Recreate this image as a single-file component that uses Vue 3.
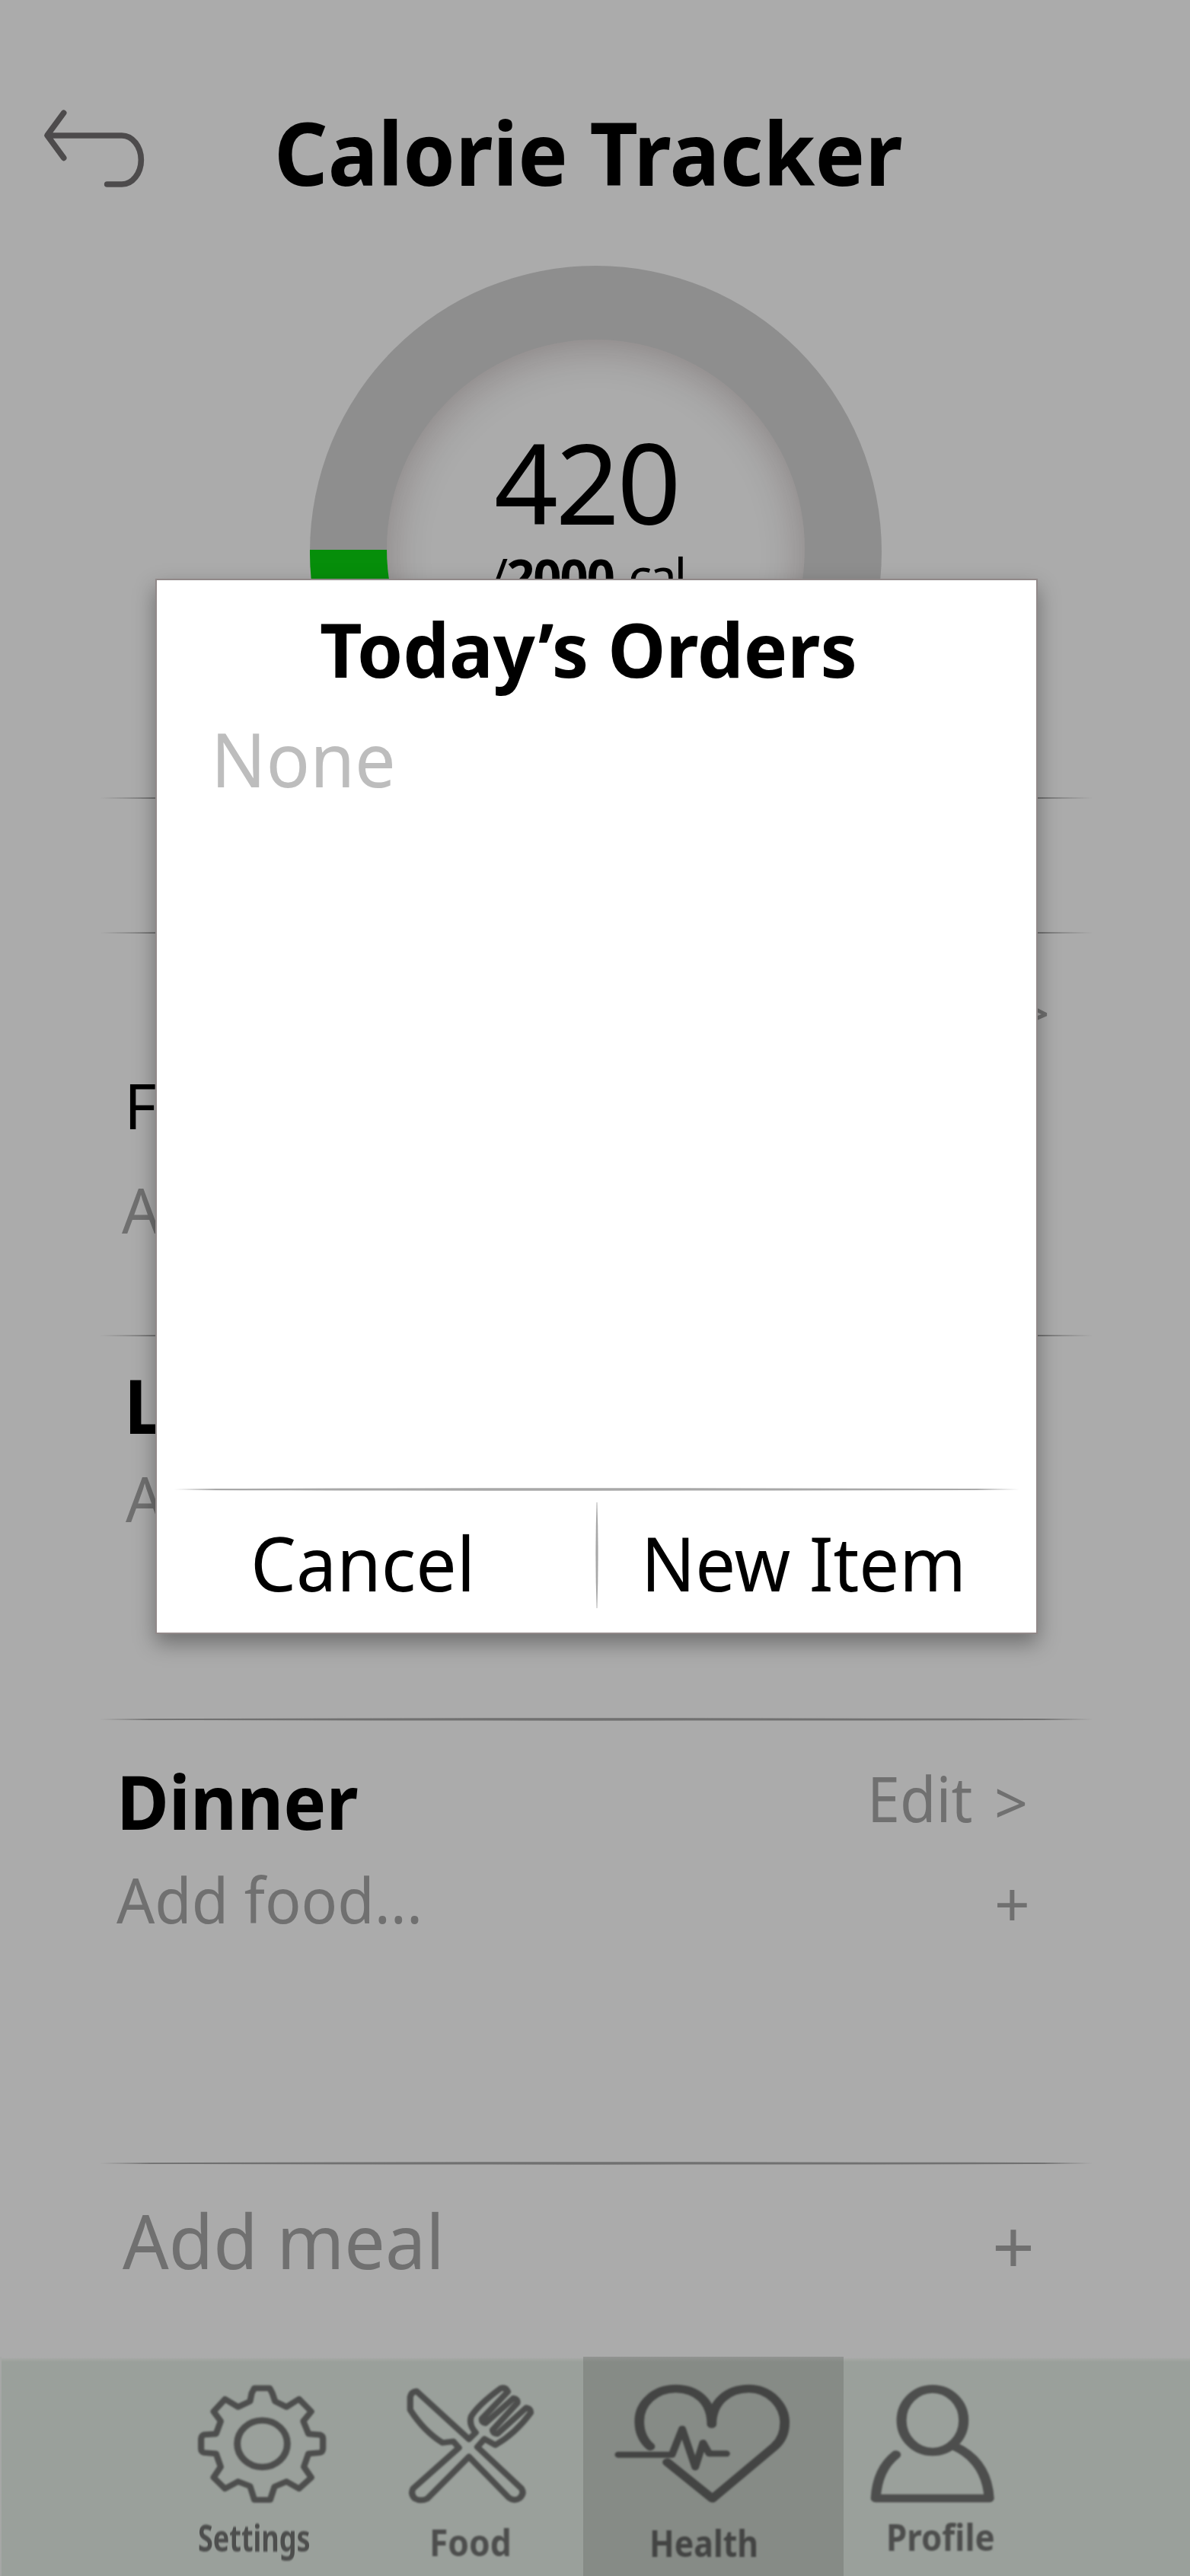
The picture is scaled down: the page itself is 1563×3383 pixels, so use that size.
<script setup>
const rule = 'M0 1.2 C33 0 67 0 100 1.2 V2.8 C67 4 33 4 0 2.8 Z'

const tabs = [
  {
    id: 'settings', label: 'Settings', box: '160 145 490 490',
    shapes: [
      { w: 23, d: 'M376 170 H432 L442 190 L452 222 L494 244 L540 213 L585 262 L556 300 L575 350 L618 354 Q628 358 628 370 V408 Q627 421 618 424 L575 428 L558 480 L585 522 L540 566 L494 538 L450 558 L434 610 H376 L360 556 L316 538 L268 566 L226 522 L252 480 L235 428 L190 424 Q180 420 180 408 V370 Q181 356 192 353 L235 350 L252 300 L226 262 L268 213 L316 244 L360 222 L366 190 Z' },
      { w: 25, d: 'M313 389 A92 92 0 0 1 497 389 A92 92 0 0 1 313 389 Z' }
    ]
  },
  {
    id: 'food', label: 'Food', box: '930 145 480 490',
    shapes: [
      { w: 23, d: 'M949 205 Q953 184 972 182 L1165 371 L1190 345 Q1164 315 1173 282 Q1200 235 1283 170 Q1300 165 1308 184 L1213 290 Q1210 305 1226 308 L1328 210 Q1345 212 1343 228 L1252 335 Q1254 350 1270 350 L1376 247 Q1393 250 1392 267 Q1335 350 1262 394 L1222 370 L1196 402 L1358 565 Q1370 585 1352 603 Q1332 618 1312 602 L1165 440 L1012 605 Q988 618 966 605 Q949 588 960 565 L1128 405 L1108 380 L1068 385 Q1000 340 949 255 Z' },
      { w: 9, d: 'M1238 292 L1322 215 M1288 330 L1345 275' }
    ]
  },
  {
    id: 'health', label: 'Health', box: '155 145 580 490', active: true,
    shapes: [
      { w: 31, d: 'M280 400 Q245 362 245 300 C245 230 295 172 362 172 C430 172 478 225 478 312 C478 225 530 172 598 172 C665 172 713 240 713 305 Q713 365 680 400 L480 605 L335 462' },
      { w: 24, d: 'M178 432 H350 L383 330 L425 482 L450 385 L470 428 H525' }
    ]
  },
  {
    id: 'profile', label: 'Profile', box: '980 145 415 490',
    shapes: [
      { w: 32, d: 'M1088 297 A100 124 0 0 1 1288 297 A100 124 0 0 1 1088 297 Z' },
      { w: 32, d: 'M1070 432 Q1010 490 1005 604 H1370 Q1362 455 1255 397' }
    ]
  }
]
</script>

<template>
  <div class="screen">
    <header class="top">
      <svg class="back" viewBox="0 0 540 390">
        <path d="M131 55 L66 143 L131 232 M68 144 H360 A76 96 0 0 1 360 336 H302" />
      </svg>
      <h1>Calorie Tracker</h1>
    </header>

    <section class="gauge">
      <svg class="ring" viewBox="0 0 751 697">
        <circle cx="375.5" cy="375.5" r="375.5" fill="#8e8e8e" />
        <path d="M0 373 A375.5 375.5 0 0 0 375.5 751 V373 Z" fill="#068e0a" />
      </svg>
      <div class="disc"></div>
      <div class="reading">
        <div class="value">420</div>
        <div class="goal">/<b>2000</b><span>cal</span></div>
      </div>
    </section>

    <svg class="rule" viewBox="0 0 100 4" preserveAspectRatio="none"><path :d="rule" /></svg>
    <section class="blank"></section>
    <svg class="rule" viewBox="0 0 100 4" preserveAspectRatio="none"><path :d="rule" /></svg>

    <section class="meal breakfast">
      <div class="row head"><span class="edit"><i class="gt">&gt;</i></span></div>
      <div class="row item">F</div>
      <div class="row add"><span>Add food...</span></div>
    </section>
    <svg class="rule" viewBox="0 0 100 4" preserveAspectRatio="none"><path :d="rule" /></svg>

    <section class="meal lunch">
      <h2 class="row">Lunch</h2>
      <div class="row add"><span>Add food...</span></div>
    </section>
    <svg class="rule" viewBox="0 0 100 4" preserveAspectRatio="none"><path :d="rule" /></svg>

    <section class="meal dinner">
      <div class="row head">
        <h2>Dinner</h2>
        <span class="edit"><span>Edit</span><i class="gt">&gt;</i></span>
      </div>
      <div class="row add"><span>Add food...</span><i class="plus">+</i></div>
    </section>
    <svg class="rule" viewBox="0 0 100 4" preserveAspectRatio="none"><path :d="rule" /></svg>

    <section class="meal new-meal">
      <div class="row add"><span>Add meal</span><i class="plus">+</i></div>
    </section>

    <nav class="tabs">
      <div v-for="t in tabs" :key="t.id" class="tab" :class="[t.id, { active: t.active }]">
        <svg :viewBox="t.box" preserveAspectRatio="none">
          <path v-for="(s, i) in t.shapes" :key="i" :d="s.d" :stroke-width="s.w" />
        </svg>
        <span class="label">{{ t.label }}</span>
      </div>
    </nav>

    <div class="modal">
      <h3>Today’s Orders</h3>
      <p class="none">None</p>
      <svg class="line" viewBox="0 0 100 4" preserveAspectRatio="none"><path :d="rule" /></svg>
      <div class="actions">
        <span class="cancel">Cancel</span>
        <svg class="split" viewBox="0 0 4 139"><path d="M1.6 0 C0 46 0 93 1.6 139 H2.4 C4 93 4 46 2.4 0 Z" /></svg>
        <span class="create">New Item</span>
      </div>
    </div>
  </div>
</template>

<style>
body { margin: 0; background: #ababab; }
</style>

<style scoped>
.screen {
  position: relative;
  display: flex;
  flex-direction: column;
  width: 1563px;
  height: 3383px;
  overflow: hidden;
  background: #ababab;
  color: #000;
  font-family: "Noto Sans", sans-serif;
  line-height: 1;
  white-space: nowrap;
}
h1, h2, h3, p { margin: 0; line-height: 1; }
i { font-style: normal; }
svg { display: block; flex: none; }
h1, h2, h3, .none, .cancel, .create, .add span, .edit span, .label { transform-origin: 0 0; }

.top { display: flex; height: 349px; }
.back { width: 180px; height: 130px; margin: 130px 0 0 40px; }
.back path {
  fill: none;
  stroke: #4d4b4c;
  stroke-width: 23;
  stroke-linecap: round;
  stroke-linejoin: round;
}
h1 { height: 115px; margin: 143px 0 0 140px; font-size: 114.4px; transform: scaleX(0.962); }

.gauge { display: grid; width: 751px; height: 697px; margin-left: 407px; overflow: hidden; }
.ring, .disc, .reading { grid-area: 1 / 1; }
.ring { width: 751px; height: 697px; }
.disc {
  width: 549px;
  height: 549px;
  margin: 97px 0 0 101px;
  border-radius: 50%;
  background: #ababab;
  box-shadow: inset 0 6px 54px rgba(36, 12, 10, 0.25);
}
.reading { padding: 210px 0 0 236px; }
.value { margin-left: 6px; font-size: 147px; letter-spacing: -3.3px; }
.goal { margin-top: 18px; font-size: 65px; letter-spacing: -2px; }
.goal span { margin-left: 19px; letter-spacing: -3.6px; }

.rule { width: 1304px; height: 4px; margin-left: 131px; fill: #707070; }
.rule, .line {
  -webkit-mask-image: linear-gradient(90deg, transparent, #000 5%, #000 95%, transparent);
  mask-image: linear-gradient(90deg, transparent, #000 5%, #000 95%, transparent);
}
.blank { height: 173px; }

.meal { box-sizing: border-box; font-size: 82px; }
.row { display: flex; justify-content: space-between; }
h2 { font-size: 98px; transform: scaleX(0.96); }
.add, .edit { color: #707070; }
.add span { transform: scaleX(0.961); }
.edit { display: flex; }
.edit span { transform: scaleX(0.942); }
.gt { padding-top: 8px; font-size: 77px; }

.breakfast { height: 525px; padding: 56px 184px 0 160px; }
.breakfast .head { height: 82px; justify-content: flex-end; }
.breakfast .item { margin: 45px 0 0 3px; }
.breakfast .add { margin-top: 55px; }

.lunch { height: 500px; padding: 40px 0 0 163px; }
.lunch .add { margin: 32px 0 0 2px; }

.dinner { height: 579px; padding: 56px 0 0 153px; }
.dinner .head { width: 1197px; height: 98px; }
.dinner .edit { padding-top: 4px; }
.dinner .gt { margin-left: 20px; }
.dinner .add { width: 1200px; margin-top: 39px; }
.dinner .plus { margin-top: 5px; }

.new-meal { height: 252px; padding: 50px 0 0 161px; font-size: 98px; }
.new-meal .row { width: 1196px; }
.new-meal .row span { transform: scaleX(0.97); }
.new-meal .plus { margin: 7px -2px 0 0; }

.tabs {
  display: flex;
  height: 288px;
  background: linear-gradient(#ababab 1px, #a1a5a1 4px, #9aa09b 7px);
  box-shadow: inset 2px 0 #a6a8a6;
}
.tab { box-sizing: border-box; padding-top: 33px; color: #4d4e4d; }
.tab svg { height: 163.3px; fill: none; stroke: #4d4e4d; stroke-linecap: round; stroke-linejoin: round; filter: blur(0.9px); }
.label {
  display: block;
  width: max-content;
  font-size: 49px;
  font-weight: 700;
  filter: blur(1px);
}
.settings { width: 480px; padding-left: 257px; }
.settings svg { width: 175px; }
.settings .label { margin: 17px 0 0 3px; transform: scaleX(0.735); }
.food { width: 286px; padding-left: 52px; }
.food svg { width: 171.4px; }
.food .label { margin: 23px 0 0 32px; transform: scaleX(0.906); }
.health { width: 342px; padding-left: 37px; }
.health svg { width: 236.7px; }
.health .label { margin: 24px 0 0 50px; transform: scaleX(0.873); }
.profile { width: 455px; padding-left: 32px; }
.profile svg { width: 169.4px; }
.profile .label { margin: 16px 0 0 24px; transform: scaleX(0.895); }
.active { background: linear-gradient(#929492, #868b86 7px); color: #434443; }
.active svg { stroke: #434443; }

.modal {
  position: absolute;
  left: 204px;
  top: 760px;
  box-sizing: border-box;
  display: flex;
  flex-direction: column;
  width: 1159px;
  height: 1386px;
  border: 2px solid #918989;
  background: #fff;
  box-shadow: 0 12px 26px rgba(0, 0, 0, 0.35);
  font-size: 98px;
}
h3 { width: max-content; margin: 41px 0 0 214px; font-size: 98px; transform: scaleX(0.984); }
.none { flex: 1; width: max-content; margin: 46px 0 0 71px; color: #bdbdbd; transform: scaleX(0.973); }
.line { width: 1111px; height: 4px; margin-left: 22px; fill: #a8a8a8; }
.actions { display: flex; height: 186px; }
.cancel { width: 453px; margin: 45px 0 0 123px; transform: scaleX(0.968); }
.split { width: 4px; height: 139px; margin-top: 15px; fill: #a8a8a8; }
.create { margin: 45px 0 0 56px; transform: scaleX(0.958); }
</style>
